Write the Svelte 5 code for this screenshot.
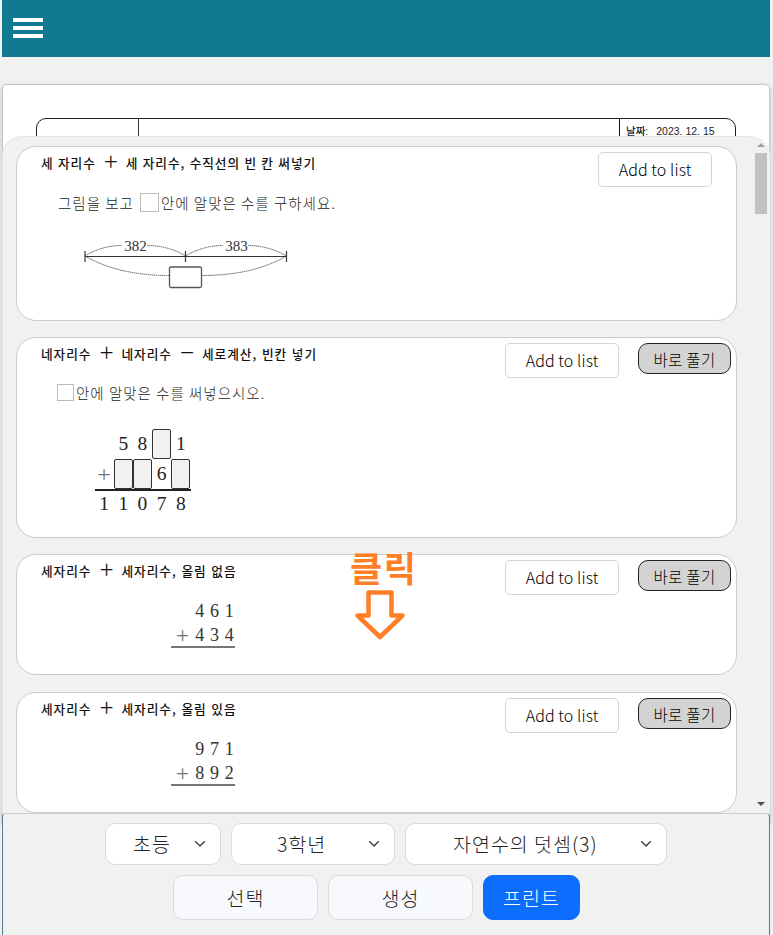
<script lang="ts">
  type Problem = {
    id: string;
    kind: 'line' | 'blanks' | 'sum';
    parts: string[];
    solvable: boolean;
    height: number;
    question?: string[];
    rows?: string[][];
  };

  const problems: Problem[] = [
    {
      id: 'number-line',
      kind: 'line',
      parts: ['세 자리수', '+', '세 자리수, 수직선의 빈 칸 써넣기'],
      solvable: false,
      height: 175,
      question: ['그림을 보고', '안에 알맞은 수를 구하세요.'],
    },
    {
      id: 'blanks',
      kind: 'blanks',
      parts: ['네자리수', '+', '네자리수', '−', '세로계산, 빈칸 넣기'],
      solvable: true,
      height: 201,
      question: ['', '안에 알맞은 수를 써넣으시오.'],
      rows: [
        ['', '5', '8', '□', '1'],
        ['+', '□', '□', '6', '□'],
        ['1', '1', '0', '7', '8'],
      ],
    },
    {
      id: 'no-carry',
      kind: 'sum',
      parts: ['세자리수', '+', '세자리수, 올림 없음'],
      solvable: true,
      height: 121,
      rows: [['', '4', '6', '1'], ['+', '4', '3', '4']],
    },
    {
      id: 'carry',
      kind: 'sum',
      parts: ['세자리수', '+', '세자리수, 올림 있음'],
      solvable: true,
      height: 121,
      rows: [['', '9', '7', '1'], ['+', '8', '9', '2']],
    },
  ];

  const filters = [
    { name: 'school', label: '초등' },
    { name: 'grade', label: '3학년' },
    { name: 'unit', label: '자연수의 덧셈(3)' },
  ];
</script>

<div class="page">
  <header>
    <button class="menu" aria-label="menu"><i></i><i></i><i></i></button>
  </header>

  <section class="sheet">
    <div class="sheet-head">
      <div class="logo-cell"></div>
      <div class="title-cell"></div>
      <div class="date-cell"><b>날짜:</b><span>2023. 12. 15</span></div>
    </div>
  </section>

  <main>
    <div class="list">
      {#each problems as p (p.id)}
        <article class={p.kind} style="height: {p.height}px">
          <div class="body">
            <h3>
              {#each p.parts as part}
                {#if part === '+' || part === '−'}<span class="op">{part}</span>{:else}<span>{part}</span>{/if}
              {/each}
            </h3>
            {#if p.question}
              <p>{#if p.question[0]}<span class="lead">{p.question[0]}</span>{/if}<i class="blank"></i><span>{p.question[1]}</span></p>
            {/if}
            {#if p.kind === 'line'}
              <svg class="number-line" width="210" height="60" viewBox="0 0 210 60">
                <g fill="none" stroke="#555" stroke-width="1">
                  <g stroke-dasharray="1.4 0.6">
                    <path d="M5 22 Q22 11.5 42 11.5M67 11.5 Q88 11.5 105.500 22" />
                    <path d="M105.500 22 Q123 11.500 143 11.500M168 11.500 Q188 11.500 206.500 22" />
                    <path d="M5 22 Q39 41.500 89 41.500M122 41.500 Q173 41.500 206.500 22" />
                  </g>
                  <path stroke="#333" stroke-width="1.2" d="M5 22.500H207M5 17V28M105.500 17V28M206.500 17V28" />
                  <rect x="89.500" y="33" width="32" height="20.500" rx="1.500" stroke-width="1.300" fill="#fff" />
                </g>
                <text x="55.500" y="16.500" text-anchor="middle">382</text>
                <text x="156.500" y="16.500" text-anchor="middle">383</text>
              </svg>
            {:else if p.rows}
              <div class="digits">
                {#each p.rows as row}
                  <div class="row">
                    {#each row as cell}
                      {#if cell === '□'}
                        <span class="cell hole"></span>
                      {:else}
                        <span class="cell" class:sign={cell === '+'}>{cell}</span>
                      {/if}
                    {/each}
                  </div>
                {/each}
              </div>
            {/if}
          </div>
          <div class="actions" class:single={!p.solvable}>
            <button class="add">Add to list</button>
            {#if p.solvable}
              <button class="solve">바로 풀기</button>
            {/if}
          </div>
        </article>
      {/each}
    </div>
    <div class="scrollbar">
      <i class="up"></i>
      <i class="thumb"></i>
      <i class="down"></i>
    </div>
  </main>

  <footer>
    <div class="filters">
      {#each filters as f}
        <button class="select {f.name}">
          <span>{f.label}</span>
          <svg width="12" height="8" viewBox="0 0 12 8"><path d="M1.200 1.300 6 6 10.800 1.300" fill="none" stroke="#444" stroke-width="1.500" /></svg>
        </button>
      {/each}
    </div>
    <div class="commands">
      <button>선택</button>
      <button>생성</button>
      <button class="print">프린트</button>
    </div>
  </footer>

  <!-- click hint lying over the list -->
  <div class="hint">
    <span>클릭</span>
    <svg width="54" height="54" viewBox="0 0 54 54">
      <path d="M15.500 4.500H38.500V27.500H49.500L27 49 4.500 27.500H15.500Z" fill="none" stroke="#ff7f27" stroke-width="4.500" stroke-linejoin="round" />
    </svg>
  </div>
</div>

<style>
  :global(body) {
    background: #f1f1f1;
    overflow: hidden;
  }

  .page {
    position: relative;
    box-sizing: border-box;
    width: 773px;
    height: 935px;
    padding: 0 3px 0 2px;
    overflow: hidden;
    font-family: 'Noto Sans CJK KR', sans-serif;
    color: #212529;
  }

  button {
    box-sizing: border-box;
    padding: 0;
    font-family: inherit;
    color: inherit;
  }

  header {
    height: 57px;
    background: #117990;
  }

  .menu {
    display: flex;
    flex-direction: column;
    gap: 4px;
    padding: 18px 0 0 11px;
    border: 0;
    background: none;
  }

  .menu i {
    width: 30px;
    height: 4px;
    background: #fff;
  }

  .sheet {
    box-sizing: border-box;
    height: 740px;
    margin-top: 27px;
    padding: 33px 33px 0;
    border: 1px solid #c8c8c8;
    border-radius: 5px;
    background: #fff;
    box-shadow: 0 2px 5px #bbb;
  }

  .sheet-head {
    display: flex;
    box-sizing: border-box;
    height: 60px;
    border: 1px solid #222;
    border-radius: 10px;
  }

  .logo-cell {
    width: 101px;
    border-right: 1px solid #333;
  }

  .title-cell {
    flex: 1;
    border-right: 1px solid #111;
  }

  .date-cell {
    display: flex;
    gap: 8px;
    box-sizing: border-box;
    width: 115px;
    padding: 4px 0 0 6px;
    font: 10.500px/16px 'Liberation Sans', 'Noto Sans CJK KR', sans-serif;
    white-space: nowrap;
  }

  .date-cell b {
    font-weight: 500;
  }

  main {
    position: relative;
    display: flex;
    box-sizing: border-box;
    width: 768px;
    height: 677px;
    margin-top: -688px;
    padding: 9px 0 0 13px;
    border: 1px solid #e6e6e6;
    border-right: 0;
    border-bottom: 0;
    border-radius: 20px 20px 0 0;
    background: #f1f1f1;
  }

  .list {
    display: flex;
    flex: none;
    flex-direction: column;
    gap: 16px;
    width: 721px;
  }

  article {
    display: flex;
    flex: none;
    justify-content: space-between;
    box-sizing: border-box;
    padding: 5px 5px 0 24px;
    border: 1px solid #ccc;
    border-radius: 20px;
    background: #fff;
  }

  article:last-child {
    margin-top: 1px;
  }

  h3 {
    display: flex;
    align-items: center;
    height: 20px;
    margin: 0;
    padding-bottom: 2px;
    font-size: 12.700px;
    font-weight: 500;
    letter-spacing: 0.950px;
    word-spacing: 0.900px;
    white-space: nowrap;
    color: #111;
  }

  .line h3 {
    word-spacing: 0.500px;
  }

  .op {
    width: 30px;
    font-family: 'Liberation Serif', serif;
    font-size: 25px;
    font-weight: 400;
    line-height: 20px;
    letter-spacing: 0;
    text-align: center;
  }

  p {
    display: flex;
    align-items: center;
    height: 22px;
    margin: 17px 0 0 17px;
    font-size: 14.500px;
    font-weight: 300;
    letter-spacing: 1px;
    white-space: nowrap;
    color: #222;
  }

  .lead {
    margin-right: 6px;
  }

  .blank {
    box-sizing: border-box;
    width: 19px;
    height: 19px;
    margin-right: 2px;
    border: 1px solid #bbb;
  }

  .blanks p {
    margin: 16px 0 0 16px;
  }

  .blanks .blank {
    width: 17px;
    height: 17px;
  }

  .number-line {
    display: block;
    margin: 21px 0 0 39px;
  }

  .number-line text {
    font: 15px 'Liberation Serif', serif;
    fill: #333;
  }

  .digits {
    font-family: 'Liberation Serif', serif;
    color: #333;
  }

  .row {
    display: flex;
  }

  .cell {
    display: flex;
    align-items: center;
    justify-content: center;
    box-sizing: border-box;
    width: 19.200px;
    height: 30px;
  }

  .sign {
    font-size: 24px;
    color: #777;
  }

  .blanks .digits {
    width: 96px;
    margin: 26px 0 0 53.500px;
    font-size: 19.500px;
    color: #222;
  }

  .hole {
    border: 1px solid #333;
    border-radius: 2px;
    background: #f1f1f1;
  }

  .blanks .row:nth-child(2) {
    border-bottom: 2px solid #222;
  }

  .blanks .row:nth-child(3) .cell {
    height: 26px;
  }

  .sum .digits {
    width: 64px;
    height: 47px;
    margin: 17px 0 0 129.500px;
    border-bottom: 2px solid #777;
    font-size: 18px;
  }

  .sum .row {
    justify-content: flex-end;
    margin-right: -2px;
  }

  .sum .cell {
    width: 14.700px;
    height: 24.500px;
  }

  .sum .sign {
    width: 20px;
  }

  .actions {
    display: flex;
    align-items: flex-start;
    gap: 19px;
  }

  .single {
    margin-right: 19px;
  }

  .add {
    width: 114px;
    height: 35px;
    padding-bottom: 1px;
    border: 1px solid #d2d4d6;
    border-radius: 5px;
    background: #fff;
    font-size: 16px;
    font-weight: 300;
    letter-spacing: 0.100px;
    color: #000;
  }

  .solve {
    width: 93px;
    height: 31px;
    border: 1px solid #222;
    border-radius: 10px;
    background: #d3d3d3;
    font-size: 15.500px;
    font-weight: 300;
    letter-spacing: 0.300px;
    color: #000;
  }

  .scrollbar {
    display: flex;
    flex: none;
    flex-direction: column;
    align-items: center;
    width: 17px;
    margin-left: 15px;
  }

  .up,
  .down {
    border: 4px solid transparent;
    border-top: 0;
    border-bottom-color: #a0a0a0;
  }

  .up {
    margin-top: -3px;
  }

  .thumb {
    width: 12px;
    height: 61px;
    margin-top: 6px;
    background: #c1c1c1;
  }

  .down {
    margin: auto 0 7px;
    border-top: 4px solid #505050;
    border-bottom: 0;
  }

  footer {
    position: relative;
    display: flex;
    flex-direction: column;
    gap: 10px;
    box-sizing: border-box;
    height: 130px;
    padding: 9px 0 0;
    border: 1px solid #4f7d8e;
    border-top-color: #ccc;
    border-radius: 4px;
    background: #f1f1f1;
  }

  .filters {
    display: flex;
    gap: 10px;
    padding-left: 102px;
  }

  .commands {
    display: flex;
    gap: 10px;
    padding-left: 170px;
  }

  .select,
  .commands button {
    border: 1px solid #d9dbdd;
    border-radius: 10px;
    background: #fff;
    font-size: 19.500px;
    font-weight: 300;
  }

  .select {
    display: flex;
    align-items: center;
    justify-content: space-between;
    width: 262px;
    height: 42px;
    padding: 0 14px 1px 47px;
    letter-spacing: 1px;
    color: #222;
  }

  .school {
    width: 116px;
    padding-left: 27px;
  }

  .grade {
    width: 164px;
    padding-left: 45px;
  }

  .commands button {
    width: 145px;
    height: 45px;
    background: #f8f9fc;
    letter-spacing: 1px;
  }

  .commands .print {
    width: 97px;
    border-color: #0d6efd;
    background: #0d6efd;
    color: #fff;
  }

  .hint {
    position: absolute;
    top: 545px;
    left: 350px;
    color: #ff7f27;
  }

  .hint span {
    display: block;
    height: 43px;
    font-size: 35px;
    font-weight: 700;
    line-height: 43px;
    letter-spacing: 1.500px;
  }

  .hint svg {
    display: block;
    margin-left: 3px;
  }
</style>
